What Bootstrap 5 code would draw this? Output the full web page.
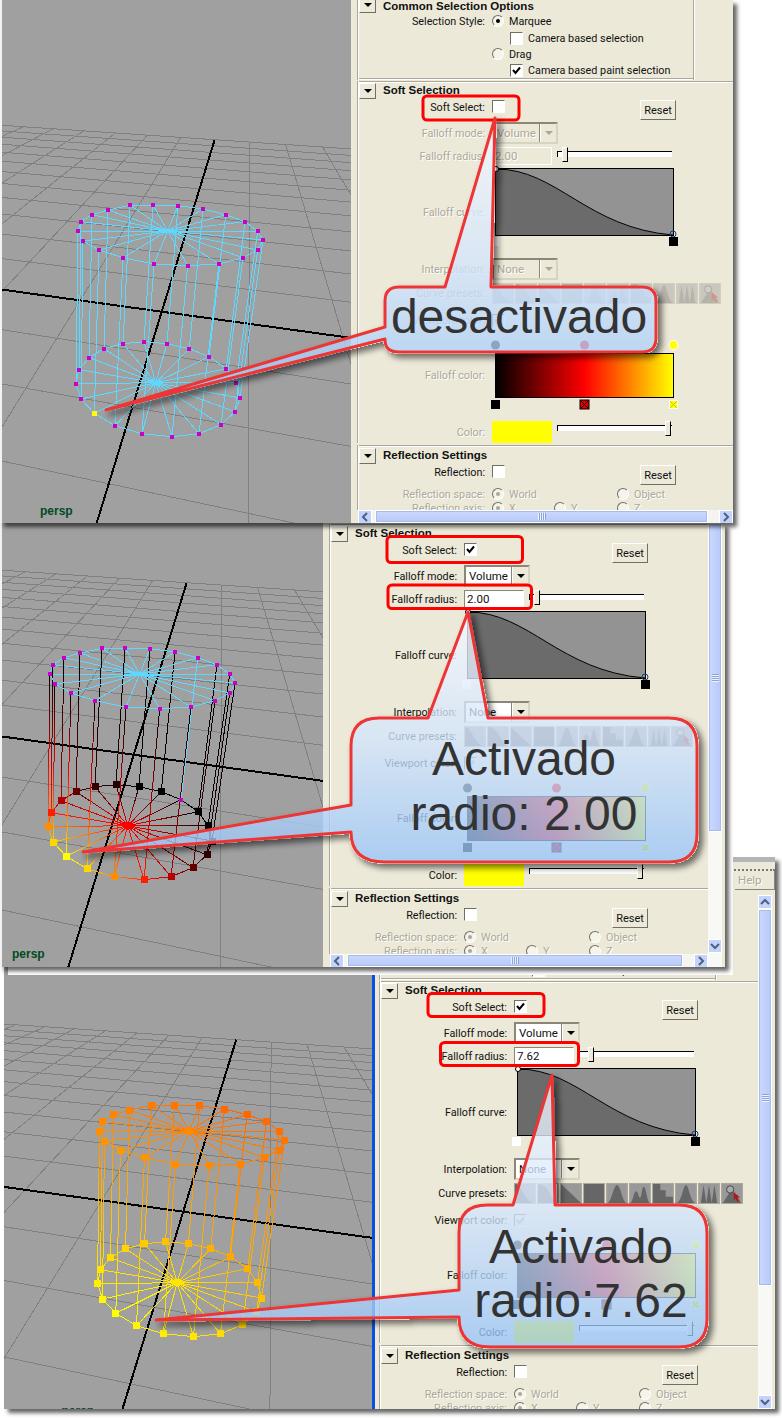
<!DOCTYPE html>
<html lang="es">
<head>
    <meta charset="UTF-8">
    <meta name="viewport" content="width=device-width, initial-scale=1.0">
    <title>Soft Selection</title>
    <link href="https://cdn.jsdelivr.net/npm/bootstrap@5.3.0/dist/css/bootstrap.min.css" rel="stylesheet">
    <style>
        body { background: #fff; margin: 0; width: 782px; height: 1418px; overflow: hidden; font-family: Roboto, "Liberation Sans", Arial, sans-serif; font-size: 10.8px; line-height: 1; color: #111; }
        .canvas { width: 782px; height: 1418px; }
        .win { background: #ece9d8; box-shadow: 4px 4px 4px rgba(0,0,0,.6); }
        .win-1 { left: 0; top: 0; width: 733px; height: 523px; z-index: 3; }
        .win-2 { left: 0; top: 523px; width: 725px; height: 444px; z-index: 2; box-shadow: 4px 4px 4px rgba(0,0,0,.6), 8px 8px 0 #fff; }
        .win-3 { left: 4px; top: 857px; width: 771px; height: 552px; z-index: 1; }
        .win-1, .win-2 { border-left: 2px solid #f2f2f2; }
        .view { flex: none; background: #a0a0a0; display: block; }
        .strip { flex: none; width: 3px; background: #0a50e0; }
        .inner-2 { margin-top: -80px; }
        .inner-3 { margin-top: 10px; }
        .pane { min-width: 0; }
        .body-1, .body-2, .body-3 { padding-left: 6px; }
        .body-3 { padding-left: 4px; }
        .menu-strip { flex: none; height: 14px; border-top: 5px solid #b5b5b5; border-bottom: 2px dotted #777; }
        .menu-row { flex: none; height: 19px; }
        .help-tab { width: 40px; height: 19px; padding: 4px 0 0 3px; border-right: 1px solid #8a8778; border-bottom: 1px solid #8a8778; font-size: 11.5px; color: #aca899; text-shadow: 1px 1px 0 #fff; }
        .menu-pad { flex: none; height: 5px; }

        .sec-frame { width: 338px; height: 80px; box-shadow: inset 1px 0 #aca899, inset 2px 0 #fff, inset -1px 0 #fff, inset -2px 0 #aca899, inset 0 -1px #fff, inset 0 -2px #aca899; }
        .sec-box { padding-top: 2px; margin-top: 1px; box-shadow: inset 1px 0 #aca899, inset 2px 0 #fff, inset 0 1px #aca899, inset 0 2px #fff; }
        .sec-title { font-family: "Liberation Sans", Arial, sans-serif; font-size: 11.5px; font-weight: 700; margin-left: 7px; white-space: nowrap; }
        .tog { width: 17px; height: 16px; margin-left: 2px; flex: none; border: 1px solid; border-color: #fff #716f64 #716f64 #fff; display: flex; align-items: center; justify-content: center; }
        .tog::after { content: ""; border-left: 4px solid transparent; border-right: 4px solid transparent; border-top: 4px solid #000; }
        .tog-up { margin-top: -4px; }
        .rh13 { height: 13px; } .rh14 { height: 14px; } .rh16 { height: 16px; } .rh17 { height: 17px; } .rh18 { height: 18px; } .rh22 { height: 22px; } .rh74 { height: 74px; } .rh88 { height: 88px; }
        .mt1px { margin-top: 1px; } .mt2px { margin-top: 2px; } .mt3px { margin-top: 3px; } .mt8px { margin-top: 8px; } .mt9px { margin-top: 9px; } .mt10px { margin-top: 10px; }
        .lab { width: 128px; margin-right: 7px; padding-top: 2px; flex: none; text-align: right; white-space: nowrap; }
        .lab-top { align-self: flex-start; height: 14px; padding-top: 1px; line-height: 14px; }
        .dim { color: #aca899; text-shadow: 1px 1px 0 #fff; }
        .ctl { width: 188px; flex: none; position: relative; }

        .chk { width: 13px; height: 13px; flex: none; background: #fff; border: 1px solid; border-color: #716f64 #fff #fff #716f64; display: inline-block; }
        .chk svg { display: block; }
        .chk.gone { background: #ece9d8; }
        .chk-indent { margin-left: 18px; }
        .rad { width: 12px; height: 12px; flex: none; border-radius: 50%; background: #f5f3ea; border: 1px solid; border-color: #716f64 #fff #fff #716f64; display: inline-flex; align-items: center; justify-content: center; }
        .rad.sel::after { content: ""; width: 4px; height: 4px; border-radius: 50%; background: #000; }
        .rad.sel.gone::after { background: #aca899; }
        .opt { white-space: nowrap; margin-left: 5px; padding-top: 2px; }
        .cell-62 { width: 62px; flex: none; }
        .cell-63 { width: 63px; flex: none; }
        .cell-125 { width: 125px; flex: none; }
        .pick { width: 66px; height: 22px; border: 2px solid; border-color: #8a8778 #d6d3c3 #d6d3c3 #8a8778; display: flex; background: #fff; }
        .pick.gone { background: #ece9d8; }
        .pick-val { flex-grow: 1; padding: 4px 0 0 3px; font-size: 11.5px; }
        .pick-btn { width: 16px; background: #ece9d8; border-left: 1px solid #fff; box-shadow: -1px 0 #8a8778; display: flex; align-items: center; justify-content: center; }
        .pick-btn::after { content: ""; border-left: 4px solid transparent; border-right: 4px solid transparent; border-top: 4px solid #000; }
        .pick.gone .pick-btn::after { border-top-color: #aca899; }
        .num { width: 60px; height: 18px; padding: 3px 0 0 2px; font-size: 11.5px; border: 1px solid; border-color: #8a8778 #fff #fff #8a8778; background: #fff; }
        .num.gone { background: #ece9d8; border-color: #fff; }
        .slide { position: absolute; left: 66px; top: 4px; width: 114px; height: 6px; border-top: 1px solid #000; background: #fff; box-shadow: -1px 0 #000; }
        .knob { position: absolute; top: -5px; width: 6px; height: 15px; background: #ece9d8; border: 1px solid; border-color: #fff #000 #000 #fff; }
        .swatch { width: 60px; height: 22px; background: #ff0; }
        .reset { width: 36px; height: 20px; margin-left: auto; margin-right: 4px; background: #ece9d8; border: 1px solid; border-color: #fff #716f64 #716f64 #fff; text-align: center; font-family: inherit; font-size: 11px; line-height: 17px; color: #111; padding: 0; border-radius: 0; }
        .tiles { display: flex; gap: 1px; }
        .tile { width: 22px; height: 21px; display: block; flex: none; border: 1px solid #aca899; }
        .tiles.gone .tile { opacity: .4; }
        .over-svg { display: block; overflow: visible; }

        .hbar { flex: none; height: 13px; margin-left: 7px; background: #f4f4f0; }
        .vbar { flex: none; width: 14px; background: #f8f8f4; }
        .sb-arrow { flex: none; width: 14px; height: 14px; background: #c3d3fb; border: 1px solid #fff; display: flex; align-items: center; justify-content: center; }
        .sb-thumb { background: linear-gradient(#cbd9fe, #b7c9f8); border: 1px solid #fff; box-shadow: 0 0 0 1px #a8bce8 inset; display: flex; align-items: center; justify-content: center; }
        .vbar .sb-thumb { background: linear-gradient(90deg, #cbd9fe, #b7c9f8); }
        .grip-h { width: 8px; height: 7px; background: repeating-linear-gradient(90deg, #eef2ff 0 1px, #8ea4d8 1px 2px); }
        .grip-v { width: 7px; height: 8px; background: repeating-linear-gradient(0deg, #eef2ff 0 1px, #8ea4d8 1px 2px); }
        .thumb-2 { height: 309px; flex: none; }
        .thumb-3 { height: 377px; flex: none; }
        .bar-end { flex: none; width: 14px; height: 14px; }
        .hgap { flex: none; width: 3px; }
        .hgap-r { flex: none; width: 11px; }
        .right-pad { flex: none; width: 3px; }

        .marks { left: 0; top: 0; z-index: 4; pointer-events: none; }
        .callout-shape { filter: url(#outerShadow); stroke: #ee3535; stroke-width: 3; stroke-linejoin: round; fill: url(#bubble); fill-opacity: .78; }
        .callout-text { font-family: "Liberation Sans", Arial, sans-serif; font-size: 48px; fill: #333; text-anchor: middle; }
        .red-box { fill: none; stroke: #f00; stroke-width: 3; }
    </style>
</head>
<body>
    <div class="canvas position-relative">
        <div class="win win-1 position-absolute d-flex overflow-hidden">
            <div id="view1"></div>
            <div class="pane flex-grow-1 d-flex flex-column">
                <div class="flex-grow-1 overflow-hidden body-1" id="panel1"></div>
                <div class="hbar d-flex" id="hbar1"></div>
            </div>
        </div>

        <div class="win win-2 position-absolute d-flex overflow-hidden">
            <div id="view2"></div>
            <div class="pane flex-grow-1 d-flex">
                <div class="pane flex-grow-1 d-flex flex-column">
                    <div class="flex-grow-1 overflow-hidden body-2"><div class="inner-2" id="panel2"></div></div>
                    <div class="hbar d-flex" id="hbar2"></div>
                </div>
                <div class="vbar d-flex flex-column">
                    <div class="sb-thumb thumb-2"><span class="grip-v"></span></div>
                    <div class="flex-grow-1"></div>
                    <div class="sb-arrow" id="down2"></div>
                    <div class="bar-end"></div>
                </div>
                <div class="right-pad"></div>
            </div>
        </div>

        <div class="win win-3 position-absolute d-flex overflow-hidden">
            <div id="view3"></div>
            <div class="strip"></div>
            <div class="pane flex-grow-1 d-flex flex-column">
                <div class="menu-strip"></div>
                <div class="menu-row d-flex justify-content-end"><div class="help-tab">Help</div></div>
                <div class="flex-grow-1 d-flex overflow-hidden">
                    <div class="pane flex-grow-1 overflow-hidden body-3"><div class="inner-3" id="panel3"></div></div>
                    <div class="d-flex flex-column">
                        <div class="menu-pad"></div>
                        <div class="vbar d-flex flex-column flex-grow-1">
                            <div class="sb-arrow" id="up3"></div>
                            <div class="sb-thumb thumb-3"><span class="grip-v"></span></div>
                            <div class="flex-grow-1"></div>
                            <div class="sb-arrow" id="down3"></div>
                        </div>
                    </div>
                    <div class="right-pad"></div>
                </div>
            </div>
        </div>

        <svg class="marks position-absolute" width="782" height="1418" viewBox="0 0 782 1418">
            <defs>
                <linearGradient id="bubble" x1="0" y1="0" x2="0" y2="1">
                    <stop offset="0" stop-color="#f4f8ff"/>
                    <stop offset=".5" stop-color="#d3e5fc"/>
                    <stop offset="1" stop-color="#98c4f8"/>
                </linearGradient>
                <!-- shadow only outside the bubble, the fill is see-through -->
                <filter id="outerShadow" x="-10%" y="-10%" width="125%" height="125%">
                    <feComponentTransfer in="SourceAlpha" result="solid"><feFuncA type="linear" slope="50"/></feComponentTransfer>
                    <feGaussianBlur in="solid" stdDeviation="3"/>
                    <feOffset dx="4" dy="4"/>
                    <feComponentTransfer result="soft"><feFuncA type="linear" slope=".55"/></feComponentTransfer>
                    <feComposite in="soft" in2="solid" operator="out" result="outer"/>
                    <feMerge><feMergeNode in="outer"/><feMergeNode in="SourceGraphic"/></feMerge>
                </filter>
            </defs>
            <rect class="red-box" x="423" y="96" width="96" height="24" rx="4"/>
            <rect class="red-box" x="387" y="536.5" width="135.5" height="26" rx="4"/>
            <rect class="red-box" x="388" y="585" width="143.5" height="23.5" rx="4"/>
            <rect class="red-box" x="428" y="993.5" width="116" height="23" rx="4"/>
            <rect class="red-box" x="440.5" y="1042.5" width="138" height="23" rx="4"/>

            <path class="callout-shape" d="M399 287 L445 287 L495 118 L491 287 L642 287 Q656 287 656 301 L656 338 Q656 352 642 352 L399 352 Q385 352 385 340 L385 339 L106 410 L385 327 L385 301 Q385 287 399 287 Z"/>
            <text class="callout-text" x="519" y="333">desactivado</text>

            <path class="callout-shape" d="M379 718 L428 718 L468 612 L488 718 L669 718 Q697 718 697 746 L697 834 Q697 862 669 862 L385 862 Q351 862 351 832 L83 852 L351 805 L351 746 Q351 718 379 718 Z"/>
            <text class="callout-text" x="524" y="775">Activado</text>
            <text class="callout-text" x="524" y="830">radio: 2.00</text>

            <path class="callout-shape" d="M487 1205 L513 1205 L552 1075 L555 1205 L679 1205 Q707 1205 707 1233 L707 1319 Q707 1347 679 1347 L490 1347 Q459 1347 459 1317 L156 1320 L459 1290 L459 1233 Q459 1205 487 1205 Z"/>
            <text class="callout-text" x="581" y="1263">Activado</text>
            <text class="callout-text" x="581" y="1317">radio:7.62</text>
        </svg>
    </div>

    <script src="https://cdn.jsdelivr.net/npm/bootstrap@5.3.0/dist/js/bootstrap.bundle.min.js"></script>
    <script>
        // cylinder verts traced from the viewport, 3x zoom coords
        const topRing = [[234,153],[243,125],[276,104],[324,90],[390,76],[459,75],[534,77],[609,87],[677,104],[735,125],[773,153],[789,180],[773,210],[729,233],[657,252],[563,257],[462,252],[369,233],[297,210],[249,183]].map(p => [p[0] / 3, 180 + p[1] / 3]);
        const botRing = [[228,611],[237,569],[267,533],[312,506],[369,491],[432,485],[501,491],[568,506],[627,530],[679,566],[708,608],[720,654],[705,695],[663,734],[597,761],[516,770],[426,761],[345,737],[283,700],[243,657]].map(p => [p[0] / 3, 180 + p[1] / 3]);
        const topMid = [503 / 3, 180 + 153 / 3];
        const botMid = [467 / 3, 180 + 608 / 3];
        const CYAN = '#5fd8ff';
        const softWeights = [0.78, 0.56, 0.35, 0.19, 0.1, 0.07, 0, 0, 0, 0, 0, 0.03, 0.1, 0.19, 0.35, 0.56, 0.78, 0.92, 1, 0.92];
        let gradCount = 0;

        function ramp(t) {
            if (t <= 0.5) return `rgb(${Math.round(t * 510)},0,0)`;
            return `rgb(255,${Math.round((t - 0.5) * 510)},0)`;
        }

        function project(u, v) {
            const a = -0.034 * u, b = 0.125 * v, w = a + b + 1;
            return { x: (a * -2321 + b * 250 + 161.7) / w, y: (a * -32 + b * 25 + 311.7) / w, w };
        }

        function groundLine(from, to, color, width) {
            let first = null, last = null;
            for (let i = 0; i <= 400; i++) {
                const t = i / 400;
                const p = project(from[0] + (to[0] - from[0]) * t, from[1] + (to[1] - from[1]) * t);
                if (p.w > 0.04) { first = first || p; last = p; }
            }
            return first ? line([first.x, first.y], [last.x, last.y], color, width) : '';
        }

        function line(a, b, color, width) {
            return `<line x1="${a[0].toFixed(1)}" y1="${a[1].toFixed(1)}" x2="${b[0].toFixed(1)}" y2="${b[1].toFixed(1)}" stroke="${color}" stroke-width="${width || 1}"/>`;
        }

        // edge coloured by the soft selection weight of its two ends
        function ramped(a, b, ta, tb) {
            const id = 'edge' + (gradCount++);
            let stops = '';
            for (let i = 0; i <= 4; i++) {
                stops += `<stop offset="${i / 4}" stop-color="${ramp(ta + (tb - ta) * i / 4)}"/>`;
            }
            return `<linearGradient id="${id}" gradientUnits="userSpaceOnUse" x1="${a[0]}" y1="${a[1]}" x2="${b[0]}" y2="${b[1]}">${stops}</linearGradient>` + line(a, b, `url(#${id})`);
        }

        function vert(p, color, size) {
            return `<rect x="${(p[0] - size / 2).toFixed(1)}" y="${(p[1] - size / 2).toFixed(1)}" width="${size}" height="${size}" fill="${color}"/>`;
        }

        function scene(mode, box, w, h) {
            let s = `<svg class="view" width="${w}" height="${h}" viewBox="${box}" shape-rendering="crispEdges">`;
            for (let i = -12; i <= 12; i++) {
                s += groundLine([i, -7.9], [i, 12], '#808080');
                if (i >= -7) s += groundLine([-12, i], [12, i], '#808080');
            }
            s += groundLine([0, -7.9], [0, 12], '#000', 2);
            s += groundLine([-12, 0], [12, 0], '#000', 2);

            const dist = i => Math.min(Math.abs(i - 18), 20 - Math.abs(i - 18)) / 10;
            for (let i = 0; i < 20; i++) {
                const j = (i + 1) % 20;
                if (mode === 1) {
                    s += line(topRing[i], botRing[i], CYAN) + line(topRing[i], topRing[j], CYAN) + line(botRing[i], botRing[j], CYAN);
                    s += line(topMid, topRing[i], CYAN) + line(botMid, botRing[i], CYAN);
                } else if (mode === 2) {
                    s += i === 8 ? line(topRing[i], botRing[i], CYAN) : ramped(topRing[i], botRing[i], 0, softWeights[i]);
                    s += line(topRing[i], topRing[j], CYAN) + line(topMid, topRing[i], CYAN);
                    s += ramped(botRing[i], botRing[j], softWeights[i], softWeights[j]);
                    s += ramped(botMid, botRing[i], 0.5, softWeights[i]);
                } else {
                    const tb = 1 - 0.17 * dist(i), tt = 0.8 - 0.1 * dist(i);
                    const tb2 = 1 - 0.17 * dist(j), tt2 = 0.8 - 0.1 * dist(j);
                    s += ramped(topRing[i], botRing[i], tt, tb);
                    s += ramped(topRing[i], topRing[j], tt, tt2) + ramped(botRing[i], botRing[j], tb, tb2);
                    s += ramped(topMid, topRing[i], 0.75, tt) + ramped(botMid, botRing[i], 0.95, tb);
                }
            }
            for (let i = 0; i < 20; i++) {
                if (mode === 1) {
                    s += vert(topRing[i], '#c800c8', 4);
                    s += i === 18 ? vert(botRing[i], '#ff0', 5) : vert(botRing[i], '#c800c8', 4);
                } else if (mode === 2) {
                    s += vert(topRing[i], '#c800c8', 4);
                    s += i === 8 ? vert(botRing[i], '#c800c8', 4) : vert(botRing[i], ramp(softWeights[i]), 7);
                } else {
                    s += vert(topRing[i], ramp(0.8 - 0.1 * dist(i)), 7);
                    s += vert(botRing[i], ramp(1 - 0.17 * dist(i)), 7);
                }
            }
            if (mode === 1) s += vert(topMid, CYAN, 4) + vert(botMid, CYAN, 4);
            if (mode === 2) s += `<circle cx="${botMid[0]}" cy="${botMid[1]}" r="4" fill="#f00"/>` + vert(topMid, CYAN, 4);
            if (mode === 3) s += `<circle cx="${botMid[0]}" cy="${botMid[1]}" r="4" fill="#ffe600"/><circle cx="${topMid[0]}" cy="${topMid[1]}" r="4" fill="#ff8a00"/>`;
            s += `<text x="40" y="515" font-family="Liberation Sans, Arial, sans-serif" font-size="12" font-weight="700" fill="#004a24" shape-rendering="auto">persp</text>`;
            return s + '</svg>';
        }

        const presetShapes = [
            'M0 0C8 0 10 21 22 21H0Z',
            'M0 0C13 0 15 21 22 21H0Z',
            'M0 0L22 21H0Z',
            'M0 0H22V21H0Z',
            'M0 21C5 21 7 1 11 1C15 1 17 21 22 21Z',
            'M0 21C3 21 4 8 7 8C9 8 9 15 11 15C13 15 13 3 15 3C18 3 19 21 22 21Z',
            'M0 0H8V7H14V14H22V21H0Z',
            'M0 21C6 21 8 1 11 1C14 1 16 21 22 21Z',
            'M2 21L5 1L8 21ZM8 21L11 1L14 21ZM14 21L17 1L20 21Z',
            'M1 21L11 5L21 21Z'
        ];

        function tiles(on) {
            let out = `<div class="tiles${on ? '' : ' gone'}">`;
            presetShapes.forEach((d, i) => {
                out += `<svg class="tile" viewBox="0 0 22 21"><rect width="22" height="21" fill="#999"/><path d="${d}" fill="#666"/>`;
                if (i === 9) out += '<circle cx="9" cy="6" r="4" fill="#aaa" stroke="#444"/><path d="M13 9L13 18L15 16L17 20L19 19L17 15L20 15Z" fill="#b01818"/>';
                out += '</svg>';
            });
            return out + '</div>';
        }

        function checkbox(checked, gone) {
            const mark = checked ? `<svg width="11" height="11" viewBox="0 0 11 11"><path d="M2 5L4.5 8L9 2.5" fill="none" stroke="${gone ? '#aca899' : '#000'}" stroke-width="2"/></svg>` : '';
            return `<span class="chk${gone ? ' gone' : ''}">${mark}</span>`;
        }

        function radio(sel, gone) {
            return `<span class="rad${sel ? ' sel' : ''}${gone ? ' gone' : ''}"></span>`;
        }

        function picker(value, gone) {
            return `<div class="pick${gone ? ' gone' : ''}"><div class="pick-val${gone ? ' dim' : ''}">${value}</div><div class="pick-btn"></div></div>`;
        }

        function curve() {
            return `<svg class="over-svg" width="188" height="88" viewBox="0 0 188 88">
                <rect x="3.5" y=".5" width="178" height="67" fill="#939393" stroke="#000"/>
                <path d="M4 1C65 1 95 60 181 67H4Z" fill="#6b6b6b"/>
                <path d="M4 1C65 1 95 60 181 67" fill="none" stroke="#000"/>
                <path d="M4 1H14" stroke="#000" stroke-width="2"/>
                <circle cx="4" cy="1" r="2.5" fill="#fff" stroke="#000"/>
                <circle cx="181" cy="66" r="3" fill="none" stroke="#1c3c78"/>
                <rect x="-2" y="69" width="9" height="9" fill="#fff"/>
                <rect x="177" y="69" width="9" height="9" fill="#000"/>
            </svg>`;
        }

        function colorRamp(id) {
            return `<svg class="over-svg" width="188" height="74" viewBox="0 0 188 74">
                <defs><linearGradient id="fall${id}"><stop offset="0" stop-color="#000"/><stop offset=".5" stop-color="#f00"/><stop offset="1" stop-color="#ff0"/></linearGradient></defs>
                <circle cx="3.5" cy="7" r="4.5" fill="#000"/>
                <circle cx="92.5" cy="7" r="4.5" fill="#f00"/>
                <circle cx="181.5" cy="7" r="4.5" fill="#ff0" stroke="#fff"/>
                <rect x="3.5" y="15.5" width="178" height="44" fill="url(#fall${id})" stroke="#000"/>
                <rect x="-1" y="62" width="9" height="9" fill="#000"/>
                <rect x="88" y="62" width="9" height="9" fill="#e00000" stroke="#000"/>
                <path d="M89 63L96 70M96 63L89 70" stroke="#000"/>
                <rect x="177.5" y="62.5" width="8" height="8" fill="#ff0" stroke="#fff"/>
                <path d="M178 63L185 70M185 63L178 70" stroke="#c8c800"/>
            </svg>`;
        }

        function row(cls, label, control, dim) {
            return `<div class="d-flex align-items-center ${cls}"><div class="lab${dim ? ' dim' : ''}">${label}</div><div class="ctl d-flex align-items-center">${control}</div></div>`;
        }

        function head(title, extra) {
            return `<div class="d-flex align-items-center rh16 ${extra || ''}"><span class="tog"></span><span class="sec-title">${title}</span></div>`;
        }

        function topRow(cls, label, box, dim) {
            return `<div class="d-flex ${cls}"><div class="lab lab-top${dim ? ' dim' : ''}">${label}</div><div class="ctl d-flex align-items-start">${box}<button type="button" class="reset">Reset</button></div></div>`;
        }

        function choice(cell, sel, text) {
            return `<span class="${cell} d-flex align-items-center">${radio(sel, true)}<span class="opt dim">${text}</span></span>`;
        }

        // same attribute editor in all three windows, only the enabled state and the values change
        function panel(cfg) {
            const off = !cfg.on;
            const id = cfg.id;
            return `
            <div class="sec-frame">
                <div class="d-flex align-items-center rh13"><span class="tog tog-up"></span><span class="sec-title">Common Selection Options</span></div>
                ${row('rh17', 'Selection Style:', radio(true) + '<span class="opt">Marquee</span>')}
                ${row('rh16', '', '<span class="chk-indent d-flex">' + checkbox(false) + '</span><span class="opt">Camera based selection</span>')}
                ${row('rh16', '', radio(false) + '<span class="opt">Drag</span>')}
                ${row('rh16', '', '<span class="chk-indent d-flex">' + checkbox(true) + '</span><span class="opt">Camera based paint selection</span>')}
            </div>
            <div class="sec-box">
                ${head('Soft Selection')}
                ${topRow('rh22 mt1px', 'Soft Select:', checkbox(cfg.on))}
                ${row('rh22', 'Falloff mode:', picker('Volume', off), off)}
                ${row('rh18 mt3px', 'Falloff radius:', `<div class="num${off ? ' gone dim' : ''}">${cfg.radius}</div><div class="slide"><div class="knob" style="left:${cfg.knob}px"></div></div>`, off)}
                ${row('rh88 mt3px', 'Falloff curve:', curve(), off)}
                ${row('rh22 mt2px', 'Interpolation:', picker('None', off), off)}
                ${row('rh22 mt2px', 'Curve presets:', tiles(cfg.on), off)}
                ${row('rh16 mt8px', 'Viewport color:', checkbox(true, true), off)}
                ${row('rh74 mt10px', 'Falloff color:', colorRamp(id), off)}
                ${row('rh22 mt9px', 'Color:', '<div class="swatch"></div><div class="slide"><div class="knob" style="left:107px"></div></div>', off)}
            </div>
            <div class="sec-box mt2px">
                ${head('Reflection Settings', 'mt1px')}
                ${topRow('rh22 mt1px', 'Reflection:', checkbox(false))}
                <div class="d-flex align-items-center rh14"><div class="lab dim">Reflection space:</div>${choice('cell-125', true, 'World')}${choice('', false, 'Object')}</div>
                <div class="d-flex align-items-center rh14"><div class="lab dim">Reflection axis:</div>${choice('cell-62', true, 'X')}${choice('cell-63', false, 'Y')}${choice('', false, 'Z')}</div>
            </div>`;
        }

        const chevrons = {
            left: 'M7 1L3 5L7 9', right: 'M3 1L7 5L3 9', up: 'M1 7L5 3L9 7', down: 'M1 3L5 7L9 3'
        };
        function chev(dir) {
            return `<svg width="10" height="10" viewBox="0 0 10 10"><path d="${chevrons[dir]}" fill="none" stroke="#4d6185" stroke-width="2"/></svg>`;
        }

        function hbar() {
            return `<div class="sb-arrow">${chev('left')}</div><div class="hgap"></div><div class="sb-thumb flex-grow-1"><span class="grip-h"></span></div><div class="hgap-r"></div><div class="sb-arrow">${chev('right')}</div>`;
        }

        document.getElementById('view1').innerHTML = scene(1, '2 0 349 523', 349, 523);
        document.getElementById('view2').innerHTML = scene(2, '30 80 321 444', 321, 444);
        document.getElementById('view3').innerHTML = scene(3, '-17.5 -43 368 552', 368, 552);
        document.getElementById('panel1').innerHTML = panel({ id: 1, on: false, radius: '2.00', knob: 4 });
        document.getElementById('panel2').innerHTML = panel({ id: 2, on: true, radius: '2.00', knob: 4 });
        document.getElementById('panel3').innerHTML = panel({ id: 3, on: true, radius: '7.62', knob: 8 });
        document.getElementById('hbar1').innerHTML = hbar();
        document.getElementById('hbar2').innerHTML = hbar();
        document.getElementById('down2').innerHTML = chev('down');
        document.getElementById('up3').innerHTML = chev('up');
        document.getElementById('down3').innerHTML = chev('down');
    </script>
</body>
</html>
